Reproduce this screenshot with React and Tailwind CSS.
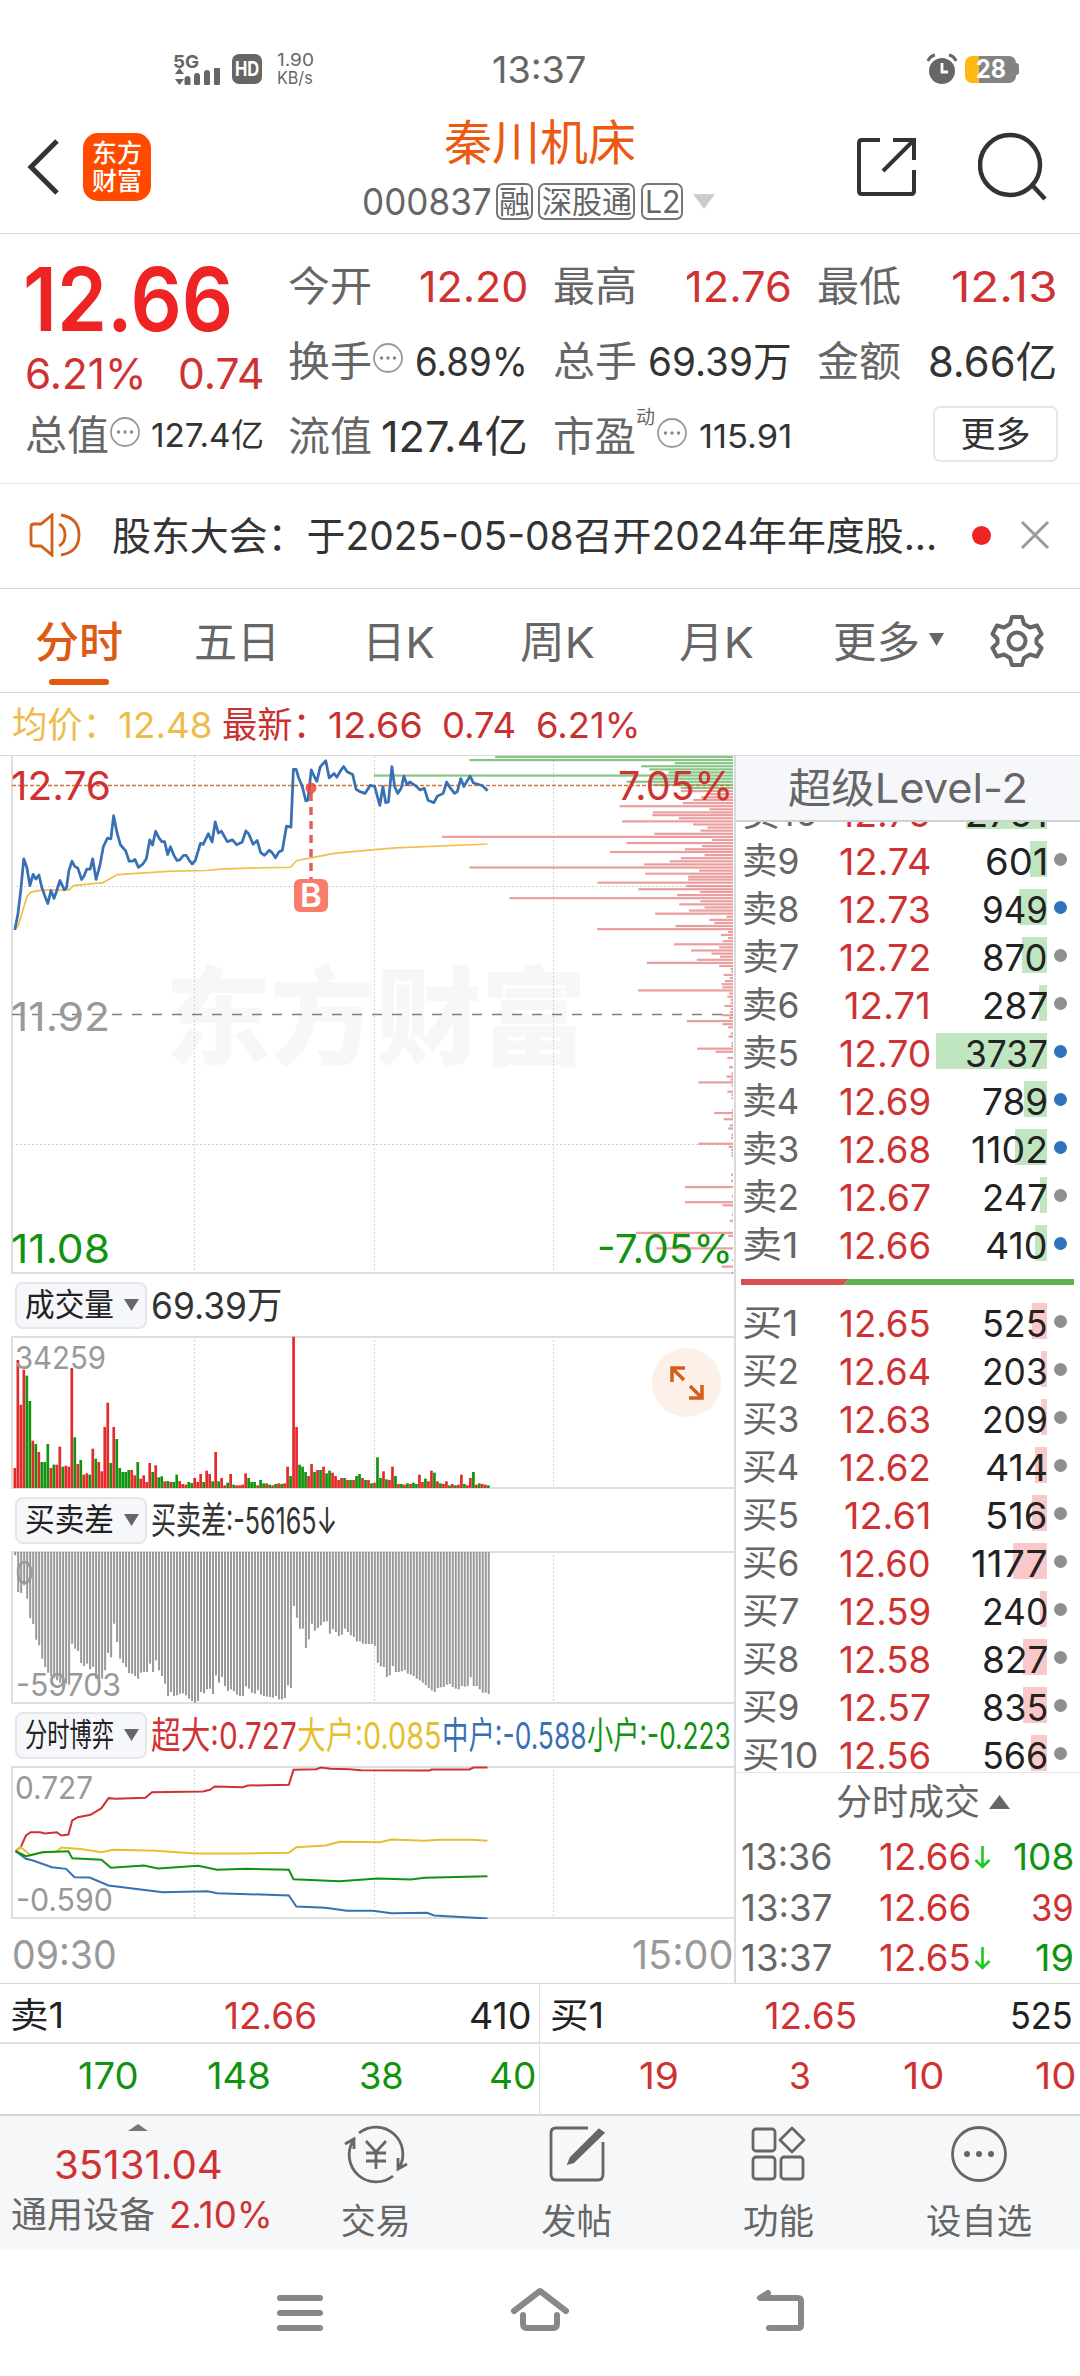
import { useLayoutEffect, useRef, useState } from 'react'

const sells = [
  { n: 10, price: '12.75', vol: 2751, bar: 81, big: false },
  { n: 9, price: '12.74', vol: 601, bar: 17, big: false },
  { n: 8, price: '12.73', vol: 949, bar: 28, big: true },
  { n: 7, price: '12.72', vol: 870, bar: 25, big: false },
  { n: 6, price: '12.71', vol: 287, bar: 8, big: false },
  { n: 5, price: '12.70', vol: 3737, bar: 111, big: true },
  { n: 4, price: '12.69', vol: 789, bar: 23, big: true },
  { n: 3, price: '12.68', vol: 1102, bar: 32, big: true },
  { n: 2, price: '12.67', vol: 247, bar: 7, big: false },
  { n: 1, price: '12.66', vol: 410, bar: 12, big: true },
]

const buys = [
  { n: 1, price: '12.65', vol: 525, bar: 15 },
  { n: 2, price: '12.64', vol: 203, bar: 6 },
  { n: 3, price: '12.63', vol: 209, bar: 6 },
  { n: 4, price: '12.62', vol: 414, bar: 12 },
  { n: 5, price: '12.61', vol: 516, bar: 15 },
  { n: 6, price: '12.60', vol: 1177, bar: 34 },
  { n: 7, price: '12.59', vol: 240, bar: 7 },
  { n: 8, price: '12.58', vol: 827, bar: 24 },
  { n: 9, price: '12.57', vol: 835, bar: 24 },
  { n: 10, price: '12.56', vol: 566, bar: 16 },
]

const ticks = [
  { time: '13:36', price: '12.66', down: true, vol: 108, volW: 61, color: 'text-[#119311]' },
  { time: '13:37', price: '12.66', down: false, vol: 39, volW: 43, color: 'text-[#cf3232]' },
  { time: '13:37', price: '12.65', down: true, vol: 19, volW: 39, color: 'text-[#119311]' },
]

const pricePts = '43,552 52,505 60,440 69,345 78,370 87,423 96,390 104,404 113,392 122,430 130,452 139,475 148,437 157,460 165,437 174,408 187,435 193,430 200,380 209,352 217,367 226,372 237,405 244,395 252,375 262,375 269,345 279,405 290,365 300,310 312,285 322,287 330,220 340,270 350,305 365,322 375,352 385,352 392,347 402,370 415,360 425,345 435,290 443,305 452,265 462,285 470,295 478,295 487,333 495,310 505,335 514,350 522,348 533,335 541,335 550,350 558,360 567,350 582,300 590,303 605,272 616,296 625,238 634,270 643,265 660,295 675,290 687,304 703,297 714,264 722,272 735,303 747,292 757,327 768,335 782,320 790,327 800,342 810,325 820,320 832,250 845,253 852,85 860,85 868,112 878,135 888,177 894,175 904,87 912,105 920,120 930,78 946,60 956,110 970,97 978,108 990,88 998,77 1008,92 1024,100 1034,143 1045,150 1060,155 1075,132 1088,135 1103,190 1112,135 1120,182 1128,180 1138,77 1146,135 1155,155 1165,140 1173,105 1182,130 1190,122 1207,133 1220,145 1232,140 1243,175 1260,182 1270,163 1287,155 1297,122 1308,140 1320,155 1328,150 1338,112 1347,135 1365,105 1375,125 1400,132 1416,147'
const avgPts = '43,550 52,540 62,510 78,455 90,442 120,436 200,436 213,423 300,414 340,391 500,381 600,379 640,375 760,371 843,370 862,350 900,343 970,329 1080,319 1150,313 1416,302'

// chips held at each price level: [y, x start]
const chipsGreen = [[49, 135], [58, 72], [67, 575], [76, 493], [85, 513], [94, 560], [103, -162], [112, 520], [121, 457], [130, 520], [139, 590]]
const chipsRed = [
  [148, 590], [157, 660], [166, 640], [174, 620], [183, 595], [192, 440], [201, 660], [210, 522], [218, 520], [227, 585], [236, 446], [245, 620],
  [254, 655], [263, 638], [272, 525], [281, 5], [290, 667], [299, 457], [308, 642], [317, 600], [325, 416], [334, 648], [343, 590], [352, 563],
  [361, 500], [370, 72], [379, 635], [388, 503], [397, 608], [405, 608], [414, 386], [424, 603], [433, 486], [441, 637], [450, 581], [459, 170],
  [468, 638], [477, 586], [486, 648], [495, 610], [504, 527], [513, 702], [522, 660], [531, 672], [540, 577], [549, 385], [557, 706], [566, 688],
  [575, 706], [584, 692], [593, 573], [602, 684], [611, 615], [620, 665], [629, 686], [638, 629], [647, 507], [656, 684], [665, 712], [673, 714],
  [682, 695], [691, 710], [700, 698], [709, 690], [718, 692], [727, 485], [736, 708], [745, 704], [754, 712], [763, 712], [772, 697], [781, 712],
  [790, 710], [799, 690], [807, 708], [816, 605], [825, 692], [834, 706], [852, 712], [861, 707], [880, 714], [888, 714], [896, 630], [905, 675],
  [923, 704], [950, 708], [968, 714], [977, 702], [986, 712], [994, 633], [1003, 714], [1021, 704], [1030, 714], [1040, 714], [1075, 715],
  [1083, 672], [1092, 714], [1101, 695], [1119, 710], [1128, 706], [1146, 714], [1155, 713], [1172, 633], [1181, 707], [1190, 713], [1200, 714],
  [1208, 714], [1262, 713], [1280, 713], [1298, 600], [1325, 715], [1342, 600], [1351, 692], [1378, 715], [1396, 710], [1431, 480], [1440, 706],
  [1476, 530], [1510, 715], [1529, 690], [1547, 715],
]

const volumes = ('60r 384r 250r 355r 337g 261g 142r 132g 108r 78g 78g 132g 60r 70g 70r 124r 64g 67r 64r 360r 152g 72r 84g 40r 44r 40g 118r 88g 78r 50r ' +
  '183r 256r 75g 183r 147g 60g 48g 48g 54g 54r 38r 78g 28r 38r 18r 75r 48g 68r 32g 35g 20r 21g 18r 18g 40g 21r 12r 10r 18g 15g 30r 18r 42r 18g ' +
  '52r 42r 20g 108r 20g 30r 8r 16g 42r 10g 8r 8r 10r 44r 30g 18g 18g 8r 24g 14g 14r 10g 8r 12g 14r 12g 14r 64r 36g 454r 183r 70g 64g 48g 36r 72r ' +
  '48g 54r 54g 64r 44g 52g 46r 36r 24r 30r 30g 24r 24g 24r 36g 42g 30r 24g 24r 14g 16r 92g 30g 50r 26g 24r 64r 36g 12r 12g 10r 14g 12r 16g 12g 40r ' +
  '18r 28g 20r 52r 46g 20r 14g 12r 20r 8g 12r 8g 10r 40r 12g 8r 30r 48g 10r 14g 12r 10r 8g').split(' ')

const diffs = [
  10, 120, 123, 100, 140, 198, 216, 263, 280, 320, 345, 362, 372, 378, 385, 392, 408, 395, 398, 275, 290, 297, 333, 342, 335, 352, 345, 380, 385, 380,
  355, 303, 316, 215, 270, 320, 333, 345, 363, 365, 372, 380, 362, 360, 360, 335, 360, 325, 355, 372, 395, 432, 420, 432, 430, 425, 424, 430, 440, 447,
  452, 447, 420, 424, 412, 410, 426, 370, 392, 375, 402, 417, 412, 418, 428, 432, 432, 403, 410, 422, 425, 415, 428, 432, 434, 435, 437, 432, 442, 442,
  438, 400, 408, 162, 197, 230, 230, 288, 262, 215, 236, 228, 220, 210, 208, 245, 232, 240, 252, 248, 230, 240, 250, 255, 268, 268, 275, 276, 276, 276,
  282, 332, 343, 345, 375, 370, 342, 360, 360, 358, 354, 365, 368, 372, 380, 385, 392, 400, 408, 415, 420, 408, 406, 405, 398, 396, 405, 410, 412, 402,
  404, 402, 376, 402, 402, 412, 422, 422, 426,
]

const games = [
  { color: '#cf3232', pts: '33,452 44,440 55,405 65,395 85,395 95,399 120,395 130,405 145,402 153,360 165,350 192,343 215,323 230,293 245,295 308,292 322,275 430,273 445,268 455,258 515,260 525,255 612,253 622,208 670,206 680,201 700,205 740,206 765,209 910,210 915,207 995,207 1003,201 1033,201' },
  { color: '#e6bf2e', pts: '33,452 44,440 65,465 90,455 120,453 130,441 175,446 215,455 240,448 310,450 330,451 415,459 520,459 612,457 628,440 690,435 720,424 805,425 830,417 900,421 930,418 1000,418 1033,421' },
  { color: '#3870b4', pts: '33,452 55,475 70,480 110,500 140,505 158,530 190,531 230,555 345,575 440,572 460,578 612,585 628,618 690,622 735,631 790,631 830,638 905,637 920,645 1033,654' },
  { color: '#119311', pts: '33,452 55,467 90,455 145,452 153,473 215,478 235,502 305,495 335,504 420,496 460,508 520,505 612,508 622,536 720,542 800,534 870,537 900,532 1033,527' },
]

// Squeezes or stretches one line of text into a cell of w pixels
function Fit({ w, className = '', children }) {
  const ref = useRef(null)
  const [scale, setScale] = useState(1)
  useLayoutEffect(() => {
    setScale(w / ref.current.offsetWidth)
  }, [w, children])
  return (
    <span className={`flex shrink-0 leading-none ${className}`} style={{ width: w }}>
      <span ref={ref} className="shrink-0 whitespace-nowrap origin-left" style={{ transform: `scaleX(${scale})` }}>
        {children}
      </span>
    </span>
  )
}

function InfoDot() {
  return (
    <svg width="32" height="32" viewBox="0 0 32 32" className="shrink-0 -mt-2">
      <circle cx="16" cy="16" r="14" fill="none" stroke="#999" strokeWidth="1.8" />
      <circle cx="9.5" cy="16" r="1.7" fill="#888" />
      <circle cx="16" cy="16" r="1.7" fill="#888" />
      <circle cx="22.5" cy="16" r="1.7" fill="#888" />
    </svg>
  )
}

function Tri({ w, h, color = '#666', up = false }) {
  return (
    <svg width={w} height={h} viewBox="0 0 10 10" preserveAspectRatio="none" className="shrink-0">
      <path d={up ? 'M0 10H10L5 0Z' : 'M0 0H10L5 10Z'} fill={color} />
    </svg>
  )
}

function StatusBar() {
  return (
    <div className="h-[104px] pt-[34px] flex items-center shrink-0 text-[#666]">
      <div className="w-[48px] ml-[173px] h-[32px] flex flex-col">
        <Fit w={26} className="text-[18px] font-bold h-[15px]">5G</Fit>
        <svg width="48" height="17" viewBox="0 0 48 17">
          <path d="M2 6L6.500 0L11 6ZM2 11L6.500 17L11 11Z" fill="#666" />
          <path d="M14.500 11V15M24 8V15M34 5V15M44 0V15" stroke="#666" strokeWidth="6" strokeLinecap="round" />
        </svg>
      </div>
      <div className="w-[30px] h-[30px] ml-[11px] rounded-[7px] bg-[#666] flex items-center justify-center text-white">
        <Fit w={24} className="text-[20px] font-bold">HD</Fit>
      </div>
      <div className="ml-[15px] w-[38px] flex flex-col gap-[1px]">
        <Fit w={37} className="text-[17px]">1.90</Fit>
        <Fit w={36} className="text-[17px]">KB/s</Fit>
      </div>
      <Fit w={94} className="ml-[177px] text-[37px]">13:37</Fit>
      <svg width="32" height="32" viewBox="0 0 32 32" className="ml-[340px]">
        <circle cx="16" cy="18" r="13" fill="#666" />
        <path d="M2 8Q4 3 9 2M30 8Q28 3 23 2" stroke="#666" strokeWidth="3" fill="none" />
        <path d="M16 10V19H22" stroke="#fff" strokeWidth="2.800" fill="none" />
      </svg>
      <div className="ml-[7px] w-[51px] h-[27px] rounded-[7px] bg-[linear-gradient(90deg,#fdb813_28%,#838383_28%)] flex items-center justify-center text-white">
        <Fit w={30} className="text-[25px] font-bold">28</Fit>
      </div>
      <div className="w-[3px] h-[12px] rounded-r-[3px] bg-[#838383]" />
    </div>
  )
}

function Header() {
  const tag = 'h-[37px] border-2 border-[#777] rounded-[7px] flex items-center justify-center text-[31px] leading-none'
  return (
    <div className="h-[130px] border-b border-[#d8d8d8] flex shrink-0">
      <div className="w-[362px] flex items-center pb-[4px]">
        <svg width="34" height="56" viewBox="0 0 34 56" className="ml-[26px]">
          <path d="M31 2L5 28L31 54" fill="none" stroke="#333" strokeWidth="5" />
        </svg>
        <div className="ml-[23px] w-[68px] h-[68px] rounded-[15px] bg-[#ff4a00] text-white text-[25px] leading-[28px] font-medium flex flex-col items-center justify-center">
          <span>东方</span>
          <span>财富</span>
        </div>
      </div>
      <div className="w-[356px] flex flex-col pt-[10px]">
        <div className="h-[58px] flex items-center justify-center text-[48px] leading-none text-[#ea5a12]">秦川机床</div>
        <div className="h-[58px] flex items-center text-[#666]">
          <Fit w={130} className="text-[37px]">000837</Fit>
          <span className={`ml-[4px] w-[37px] shrink-0 ${tag}`}>融</span>
          <span className={`ml-[5px] w-[97px] shrink-0 ${tag}`}><Fit w={90}>深股通</Fit></span>
          <span className={`ml-[6px] w-[42px] shrink-0 ${tag}`}><Fit w={35}>L2</Fit></span>
          <div className="ml-[10px]"><Tri w={22} h={15} color="#ccc" /></div>
        </div>
      </div>
      <div className="flex items-center pb-[4px]">
        <svg width="60" height="60" viewBox="0 0 60 60" className="ml-[139px]" fill="none" stroke="#333" strokeWidth="4">
          <path d="M23 3H5Q2 3 2 6V54Q2 57 5 57H54Q57 57 57 54V33M57 23V3H36M57 3L26 34" />
        </svg>
        <svg width="70" height="70" viewBox="0 0 70 70" className="ml-[61px]" fill="none" stroke="#333" strokeWidth="4.500">
          <circle cx="32" cy="33" r="30" />
          <path d="M55 54L67 67" />
        </svg>
      </div>
    </div>
  )
}

function Stat({ label, labelW = 84, value, w, size = 'text-[43px]', red, sup, info, className = '' }) {
  return (
    <div className={`h-[75px] flex items-center ${className}`}>
      <Fit w={labelW} className="text-[41px] text-[#666]">{label}</Fit>
      {sup && <span className="w-[20px] text-[19px] leading-none text-[#666] self-start mt-[9px]">{sup}</span>}
      {info && <InfoDot />}
      <Fit w={w} className={`ml-auto ${size} ${red ? 'text-[#cf3232]' : 'text-[#333]'}`}>{value}</Fit>
    </div>
  )
}

function Quote() {
  return (
    <div className="h-[250px] pt-[15px] pl-[25px] border-b border-[#ececec] flex shrink-0">
      <div className="w-[239px]">
        <div className="h-[100px] flex items-center">
          <Fit w={210} className="text-[88px] font-semibold text-[#ee2424] -ml-[2px]">12.66</Fit>
        </div>
        <div className="h-[49px] flex items-center justify-between text-[#cf3232] text-[43px]">
          <Fit w={122}>6.21%</Fit>
          <Fit w={86}>0.74</Fit>
        </div>
        <Stat label="总值" info value="127.4亿" w={113} size="text-[33px]" />
      </div>
      <div className="ml-[24px] w-[240px]">
        <Stat label="今开" value="12.20" w={109} red />
        <Stat label="换手" info value="6.89%" w={113} size="text-[39px]" />
        <Stat label="流值" value="127.4亿" w={147} />
      </div>
      <div className="ml-[25px] w-[239px]">
        <Stat label="最高" value="12.76" w={107} red />
        <Stat label="总手" value="69.39万" w={144} size="text-[40px]" />
        <Stat label="市盈" labelW={83} sup="动" info value="115.91" w={93} size="text-[33px]" />
      </div>
      <div className="ml-[25px] w-[240px]">
        <Stat label="最低" value="12.13" w={106} red />
        <Stat label="金额" value="8.66亿" w={129} size="text-[42px]" />
        <div className="h-[75px] flex items-center justify-end">
          <button className="w-[125px] h-[56px] mt-[-5px] mr-[-1px] border-2 border-[#e6e6e6] rounded-[7px] text-[35px] leading-none text-[#333]">更多</button>
        </div>
      </div>
    </div>
  )
}

function Notice() {
  return (
    <div className="h-[105px] border-b border-[#d8d8d8] flex items-center shrink-0 pb-[2px]">
      <svg width="52" height="44" viewBox="0 0 52 44" className="ml-[29px]" fill="none" stroke="#d2601a" strokeWidth="2.800">
        <path d="M23 2V42L12 33H5Q2 33 2 30V14Q2 11 5 11H12ZM30 11Q36 14 36 22Q36 30 30 33M32 2Q50 5 50 22Q50 39 32 42" />
      </svg>
      <Fit w={825} className="ml-[31px] text-[39px] text-[#333]">股东大会：于2025-05-08召开2024年年度股...</Fit>
      <div className="ml-[35px] w-[19px] h-[19px] rounded-full bg-[#ee2424]" />
      <svg width="30" height="30" viewBox="0 0 30 30" className="ml-[29px]">
        <path d="M2 2L28 28M28 2L2 28" stroke="#999" strokeWidth="3" />
      </svg>
    </div>
  )
}

function Tabs() {
  return (
    <div className="h-[104px] border-b border-[#d8d8d8] flex shrink-0 text-[43px] leading-none text-[#666] pt-[32px]">
      <div className="ml-[35px] w-[88px] h-[64px] flex flex-col items-center justify-between text-[#dd5a14]">
        <Fit w={88} className="h-[46px] font-medium">分时</Fit>
        <div className="w-[60px] h-[6px] mb-0 rounded-[3px] bg-[#e4580f]" />
      </div>
      <Fit w={86} className="ml-[71px]">五日</Fit>
      <Fit w={73} className="ml-[82px]">日K</Fit>
      <Fit w={75} className="ml-[85px]">周K</Fit>
      <Fit w={75} className="ml-[84px]">月K</Fit>
      <Fit w={87} className="ml-[79px]">更多</Fit>
      <div className="ml-[9px] mt-[12px]"><Tri w={15} h={13} /></div>
      <svg width="54" height="54" viewBox="0 0 54 54" className="ml-[46px] -mt-[7px]" fill="none" stroke="#666" strokeWidth="4">
        <path d="M22 3H32L34 10L40 13.500L47 11.500L51.500 20L46.500 25V29L51.500 34L47 42.500L40 40.500L34 44L32 51H22L20 44L14 40.500L7 42.500L2.500 34L7.500 29V25L2.500 20L7 11.500L14 13.500L20 10Z" strokeLinejoin="round" />
        <circle cx="27" cy="27" r="8.500" />
      </svg>
    </div>
  )
}

function PriceBar() {
  return (
    <div className="h-[63px] pt-[2px] border-b border-[#d8d8d8] flex items-center shrink-0 text-[36px] text-[#c93030]">
      <Fit w={106} className="ml-[12px] text-[#eebb4d]">均价：</Fit>
      <Fit w={95} className="text-[#eebb4d]">12.48</Fit>
      <Fit w={106} className="ml-[9px]">最新：</Fit>
      <Fit w={95}>12.66</Fit>
      <Fit w={74} className="ml-[19px]">0.74</Fit>
      <Fit w={104} className="ml-[20px]">6.21%</Fit>
    </div>
  )
}

function Grid({ h }) {
  return (
    <>
      <path d={`M194.500 0V${h}M374.500 0V${h}M553.500 0V${h}`} stroke="#d4d4d4" strokeDasharray="2 2" />
      <path d={`M734 1H12V${h - 1}H734`} fill="none" stroke="#dedede" strokeWidth="2" />
    </>
  )
}

function PriceChart() {
  const chip = ([y, x]) => <rect key={y} x={440 + x / 2.45} y={y / 2.904 - 17} width={293 - x / 2.45} height="2.200" />
  return (
    <svg width="734" height="518" viewBox="0 0 734 518" className="block">
      <text x="165" y="300" fontSize="106" fontWeight="900" textLength="422" fill="#f7f7f7">东方财富</text>
      <path d="M194.500 0V518M374.500 0V518M553.500 0V518M12 130.500H733M12 388.500H733" stroke="#d4d4d4" strokeDasharray="2 2" />
      <path d="M12 0V518M11 517H734" stroke="#dedede" strokeWidth="2" />
      <path d="M12 258.500H733" stroke="#808080" strokeWidth="1.600" strokeDasharray="10 10" />
      <g fill="#5fb25f" fillOpacity="0.75">{chipsGreen.map(chip)}</g>
      <g fill="#e06a6a" fillOpacity="0.65">{chipsRed.map(chip)}</g>
      <path d="M12 29.500H733" stroke="#cc7840" strokeWidth="1.500" strokeDasharray="4 2" />
      <g transform="translate(0 -16) scale(0.34436)" fill="none" strokeLinejoin="round">
        <polyline points={avgPts} stroke="#f0bf4e" strokeWidth="5" />
        <polyline points={pricePts} stroke="#3870b4" strokeWidth="8" />
      </g>
      <path d="M311 37V125" stroke="#e06158" strokeWidth="3.500" strokeDasharray="8 6" />
      <circle cx="311" cy="32" r="5.500" fill="#ee4438" fillOpacity="0.85" />
      <rect x="294" y="123" width="34" height="33" rx="6" fill="#fa7d6c" />
      <text x="311" y="151" fontSize="33" fontWeight="600" textAnchor="middle" fill="#fff">B</text>
      <g fontSize="40">
        <text x="11" y="44" textLength="100" lengthAdjust="spacingAndGlyphs" fill="#cf3232">12.76</text>
        <text x="11" y="275" textLength="99" lengthAdjust="spacingAndGlyphs" fill="#999">11.92</text>
        <text x="11" y="507" textLength="99" lengthAdjust="spacingAndGlyphs" fill="#119311">11.08</text>
        <text x="618" y="44" textLength="115" lengthAdjust="spacingAndGlyphs" fill="#cf3232">7.05%</text>
        <text x="597" y="507" textLength="136" lengthAdjust="spacingAndGlyphs" fill="#119311">-7.05%</text>
      </g>
    </svg>
  )
}

function ChartTitle({ name, nameW = 89, children }) {
  return (
    <div className="h-[62px] flex items-center pl-[15px]">
      <div className="w-[132px] h-[47px] border-2 border-[#e6e6ea] rounded-[8px] bg-[#f6f7fa] flex items-center pl-[8px] text-[#222]">
        <Fit w={nameW} className="text-[32px]">{name}</Fit>
        <div className="ml-[10px]"><Tri w={15} h={12} /></div>
      </div>
      <div className="flex items-center ml-[4px] text-[37px] text-[#333]">{children}</div>
    </div>
  )
}

function VolumeChart() {
  return (
    <div className="relative h-[153px]">
      <svg width="734" height="153" viewBox="0 0 734 153" className="block">
        <Grid h={153} />
        {volumes.map((v, i) => {
          const h = parseInt(v) / 3
          return <rect key={i} x={13.5 + i * 2.997} y={152 - h} width="2.700" height={h} fill={v.endsWith('r') ? '#e32b2b' : '#109510'} />
        })}
        <text x="15" y="33" fontSize="31" textLength="91" lengthAdjust="spacingAndGlyphs" fill="#999">34259</text>
      </svg>
      <div className="absolute right-[13px] top-[12px] w-[69px] h-[69px] rounded-full bg-[#fdf0e9] flex items-center justify-center">
        <svg width="36" height="36" viewBox="0 0 36 36" fill="none" stroke="#d2601a" strokeWidth="3.500">
          <path d="M3 17V3H16M3 3L15 15M33 20V33H20M33 33L21 21" />
        </svg>
      </div>
    </div>
  )
}

function DiffChart() {
  return (
    <svg width="734" height="153" viewBox="0 0 734 153" className="block">
      <Grid h={153} />
      {diffs.map((d, i) => (
        <rect key={i} x={14.2 + i * 2.997} y="1" width="2" height={d / 3} fill="#999" />
      ))}
      <text x="15" y="33" fontSize="31" textLength="19" lengthAdjust="spacingAndGlyphs" fill="#999">0</text>
      <text x="16" y="145" fontSize="31" textLength="105" lengthAdjust="spacingAndGlyphs" fill="#999">-59703</text>
    </svg>
  )
}

function GameChart() {
  return (
    <svg width="734" height="153" viewBox="0 0 734 153" className="block">
      <Grid h={153} />
      {games.map(g => (
        <polyline key={g.color} points={g.pts} transform="translate(0 -65.500) scale(0.4719 0.33333)" fill="none" stroke={g.color} strokeWidth="2" vectorEffect="non-scaling-stroke" />
      ))}
      <text x="15" y="33" fontSize="31" textLength="78" lengthAdjust="spacingAndGlyphs" fill="#999">0.727</text>
      <text x="16" y="145" fontSize="31" textLength="97" lengthAdjust="spacingAndGlyphs" fill="#999">-0.590</text>
    </svg>
  )
}

function BookRow({ side, row, barColor }) {
  const v = String(row.vol)
  return (
    <div className="relative h-[48px] flex items-center shrink-0">
      <div className={`absolute right-[33px] top-[4px] h-[36px] ${barColor}`} style={{ width: row.bar }} />
      <Fit w={row.n === 10 ? 76 : 57} className="relative ml-[6px] text-[36px] text-[#666]">{side}{row.n}</Fit>
      <Fit w={row.price.endsWith('1') ? 87 : 92} className="relative ml-auto mr-[20px] text-[37px] text-[#cf3232]">{row.price}</Fit>
      <div className="w-[97px] flex justify-end relative">
        <Fit w={v.length === 4 ? (v.startsWith('11') ? 77 : 83) : v.includes('1') ? 63 : 66} className="text-[37px] text-[#222]">{v}</Fit>
      </div>
      <div className={`relative ml-[6px] mr-[13px] mt-[-4px] w-[13px] h-[13px] rounded-full ${row.big ? 'bg-[#2f73bf]' : 'bg-[#8e8e93]'}`} />
    </div>
  )
}

function OrderBook() {
  return (
    <div className="w-[346px] border-l-2 border-[#d8dadf] flex flex-col h-[1227px]">
      <div className="h-[66px] border-b-2 border-[#cfd0d4] bg-[#f6f7fa] flex items-center justify-center shrink-0">
        <Fit w={240} className="text-[41px] text-[#666]">超级Level-2</Fit>
      </div>
      <div className="h-[951px] overflow-hidden border-b border-[#e4e4e4] shrink-0">
        <div className="flex flex-col -mt-[33px]">
          {sells.map(r => <BookRow key={r.n} side="卖" row={r} barColor="bg-[#c0e6c0]" />)}
          <div className="h-[30px] pt-[10px] pl-[5px] flex">
            <svg width="333" height="6" viewBox="0 0 333 6">
              <path d="M0 0H108L102 6H0Z" fill="#d65050" />
              <path d="M108 0H333V6H102Z" fill="#62b350" />
            </svg>
          </div>
          {buys.map(r => <BookRow key={r.n} side="买" row={r} barColor="bg-[#fac8c8]" />)}
        </div>
      </div>
      <div className="h-[59px] flex items-center justify-center pl-[30px] gap-[9px]">
        <Fit w={144} className="text-[36px] text-[#666]">分时成交</Fit>
        <Tri w={21} h={14} up />
      </div>
      {ticks.map((t, i) => (
        <div key={i} className="h-[51px] flex items-center text-[37px]">
          <Fit w={91} className="ml-[5px] text-[#666]">{t.time}</Fit>
          <Fit w={92} className="ml-[47px] text-[#cf3232]">{t.price}</Fit>
          <svg width="17" height="24" viewBox="0 0 17 24" className="ml-[3px]" fill="none" stroke="#1ec81e" strokeWidth="2.600">
            {t.down && <path d="M8.500 1V22M1.500 15L8.500 22L15.500 15" />}
          </svg>
          <Fit w={t.volW} className={`ml-auto mr-[6px] ${t.color}`}>{t.vol}</Fit>
        </div>
      ))}
    </div>
  )
}

function BestQueue({ side, price, vol, list, color }) {
  return (
    <div className="w-[540px] h-[130px] text-[37px]">
      <div className="h-[60px] pt-[4px] border-b-2 border-[#e0e0e0] flex items-center justify-between pl-[10px] pr-[7px] text-[#222]">
        <Fit w={54} className="text-[35px]">{side}</Fit>
        <Fit w={93} className="ml-[8px] text-[#cf3232]">{price}</Fit>
        <Fit w={63}>{vol}</Fit>
      </div>
      <div className={`h-[63px] flex items-center pl-[6px] ${color}`}>
        {list.map(([n, w], i) => (
          <div key={i} className="w-[132.500px] flex justify-end"><Fit w={w}>{n}</Fit></div>
        ))}
      </div>
    </div>
  )
}

function NavItem({ label, w, children }) {
  return (
    <div className="flex-1 flex flex-col items-center pt-[8px]">
      <svg width="66" height="60" viewBox="0 0 66 60" fill="none" stroke="#666" strokeWidth="2.800">{children}</svg>
      <Fit w={w} className="mt-[20px] text-[35px] text-[#666]">{label}</Fit>
    </div>
  )
}

function BottomBar() {
  return (
    <div className="h-[136px] border-t-2 border-[#d8d8d8] bg-[#f6f7f9] flex shrink-0">
      <div className="w-[275px] flex flex-col items-center pt-[8px]">
        <Tri w={20} h={7} color="#777" up />
        <Fit w={169} className="mt-[14px] text-[40px] text-[#cf3232] ml-[2px]">35131.04</Fit>
        <div className="flex items-center self-start ml-[11px] mt-[11px]">
          <Fit w={144} className="text-[36px] text-[#666]">通用设备</Fit>
          <Fit w={104} className="ml-[14px] text-[37px] text-[#cf3232]">2.10%</Fit>
        </div>
      </div>
      <NavItem label="交易" w={70}>
        <path d="M16 9A27 27 0 0 1 56 44M50 52A27 27 0 0 1 10 17M2 20L11 15V25M64 40L55 45V34" />
        <path d="M23 17L33 28L43 17M33 28V45M23 29H43M23 37H43" />
      </NavItem>
      <NavItem label="发帖" w={71}>
        <path d="M44 4H12Q7 4 7 9V50Q7 56 12 56H54Q59 56 59 50V18" />
        <path d="M55 6L59 9L29 38L25 39L27 34ZM51 10L55 13" fill="#666" />
      </NavItem>
      <NavItem label="功能" w={71}>
        <rect x="8" y="5" width="22" height="22" rx="3" />
        <rect x="8" y="33" width="22" height="22" rx="3" />
        <rect x="36" y="33" width="22" height="22" rx="3" />
        <path d="M47 4L59 16L47 28L35 16Z" strokeLinejoin="round" />
      </NavItem>
      <NavItem label="设自选" w={106}>
        <circle cx="33" cy="30" r="26.500" />
        <g fill="#666" stroke="none">
          <circle cx="21" cy="30" r="3" />
          <circle cx="33" cy="30" r="3" />
          <circle cx="45" cy="30" r="3" />
        </g>
      </NavItem>
    </div>
  )
}

function SystemNav() {
  return (
    <div className="h-[126px] flex shrink-0 pt-[34px]">
      <svg width="60" height="52" viewBox="0 0 60 52" className="ml-[270px]" stroke="#888" strokeWidth="6" strokeLinecap="round">
        <path d="M10 14H50M10 29H50M10 44H50" />
      </svg>
      <svg width="70" height="52" viewBox="0 0 70 52" className="ml-[175px]" fill="none" stroke="#888" strokeWidth="6" strokeLinecap="round" strokeLinejoin="round">
        <path d="M9 27L35 7L61 27M18 31V40Q18 44 22 44H48Q52 44 52 40V31" />
      </svg>
      <svg width="60" height="52" viewBox="0 0 60 52" className="ml-[175px]" fill="none" stroke="#888" strokeWidth="6" strokeLinecap="round" strokeLinejoin="round">
        <path d="M18 9L10 14H48Q51 14 51 17V41Q51 44 48 44H19" />
      </svg>
    </div>
  )
}

export default function App() {
  return (
    <div className="w-[1080px] h-[2376px] bg-white flex flex-col overflow-hidden font-['Inter','Noto_Sans_CJK_SC',sans-serif]">
      <StatusBar />
      <Header />
      <Quote />
      <Notice />
      <Tabs />
      <PriceBar />
      <div className="h-[1228px] border-b border-[#d8d8d8] flex shrink-0">
        <div className="w-[734px]">
          <PriceChart />
          <ChartTitle name="成交量"><Fit w={131}>69.39万</Fit></ChartTitle>
          <VolumeChart />
          <ChartTitle name="买卖差"><Fit w={186}>买卖差:-56165↓</Fit></ChartTitle>
          <DiffChart />
          <ChartTitle name="分时博弈">
            <Fit w={146} className="text-[#cf3232]">超大:0.727</Fit>
            <Fit w={145} className="text-[#e6bf2e]">大户:0.085</Fit>
            <Fit w={145} className="text-[#3870b4]">中户:-0.588</Fit>
            <Fit w={144} className="text-[#119311]">小户:-0.223</Fit>
          </ChartTitle>
          <GameChart />
          <div className="h-[65px] pt-[6px] flex items-center justify-between pl-[12px] text-[40px] text-[#999]">
            <Fit w={105}>09:30</Fit>
            <Fit w={102}>15:00</Fit>
          </div>
        </div>
        <OrderBook />
      </div>
      <div className="h-[130px] flex shrink-0 divide-x divide-[#e0e0e0]">
        <BestQueue side="卖1" price="12.66" vol="410" list={[[170, 61], [148, 64], [38, 45], [40, 47]]} color="text-[#119311]" />
        <BestQueue side="买1" price="12.65" vol="525" list={[[19, 40], [3, 22], [10, 41], [10, 41]]} color="text-[#cf3232]" />
      </div>
      <BottomBar />
      <SystemNav />
    </div>
  )
}
